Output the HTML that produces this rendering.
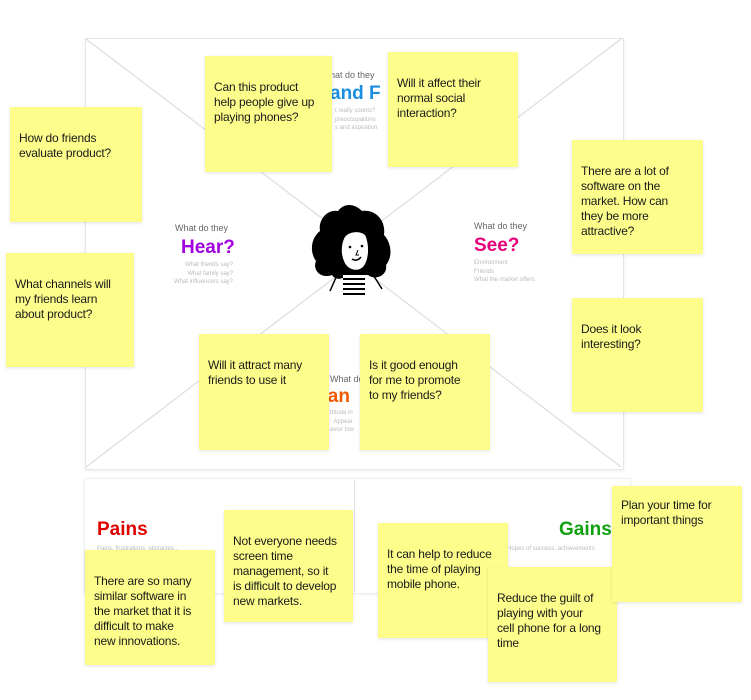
<!DOCTYPE html>
<html><head><style>
body{margin:0;width:751px;height:700px;background:#fff;position:relative;overflow:hidden;font-family:"Liberation Sans",sans-serif}
.s{position:absolute;background:#fdfd8c;box-shadow:0 1px 3px rgba(0,0,0,.12);font-size:12px;letter-spacing:-0.2px;line-height:15px;color:#1a1a1a;padding:24px 4px 0 9px;box-sizing:border-box;white-space:nowrap;overflow:hidden}
.t{position:absolute;color:#666;font-size:9px;white-space:nowrap}
.sm{position:absolute;color:#bbb;font-size:6px;line-height:8.5px;white-space:nowrap}
.h{position:absolute;font-weight:bold;font-size:19px;white-space:nowrap}
</style></head><body>
<div style="position:absolute;left:85px;top:38px;width:537px;height:430px;border:1px solid #e6e6e6;box-shadow:0 1px 3px rgba(0,0,0,.08)"></div>
<svg style="position:absolute;left:0;top:0" width="751" height="700"><g stroke="#ddd" stroke-width="1.2"><line x1="86" y1="39" x2="340" y2="232"/><line x1="621" y1="39" x2="367" y2="232"/><line x1="86" y1="467" x2="338" y2="275"/><line x1="621" y1="467" x2="370" y2="275"/></g>
<g transform="translate(300,195)">
<path d="M38 16 C28 14 18 24 20 36 C10 44 10 58 16 66 C12 76 22 84 32 80 C36 86 44 84 46 80 L68 80 C76 86 88 80 86 70 C94 60 90 46 84 40 C86 26 76 14 62 16 C54 8 44 8 38 16Z" fill="#000"/>
<path d="M44 42 C48 36 60 34 66 40 C70 50 70 64 64 72 C58 78 48 76 44 68 C40 60 40 50 44 42Z" fill="#fff" stroke="#000" stroke-width="1.5"/>
<circle cx="50" cy="52" r="1.3"/><circle cx="62" cy="51" r="1.3"/><path d="M58 55 L56 60 L59 60" stroke="#000" fill="none" stroke-width="1"/><path d="M52 64 Q57 67 61 62" stroke="#000" fill="none" stroke-width="1.5"/>
<rect x="43" y="80" width="22" height="20" fill="#fff"/><g stroke="#000" stroke-width="2"><line x1="43" y1="84" x2="65" y2="84"/><line x1="43" y1="89" x2="65" y2="89"/><line x1="43" y1="94" x2="65" y2="94"/><line x1="43" y1="99" x2="65" y2="99"/></g>
<path d="M38 78 L30 96 M72 78 L82 94" stroke="#000" stroke-width="1.5" fill="none"/></g></svg>
<div class="t" style="left:175px;top:223px">What do they</div>
<div class="h" style="left:181px;top:237px;color:#a100e0">Hear?</div>
<div class="sm" style="left:163px;top:261px;text-align:right;width:70px">What friends say?<br>What family say?<br>What influencers say?</div>
<div class="t" style="left:474px;top:221px">What do they</div>
<div class="h" style="left:474px;top:235px;color:#e8007a">See?</div>
<div class="sm" style="left:474px;top:259px">Environment<br>Friends<br>What the market offers</div>
<div class="t" style="left:330px;top:70px">hat do they</div>
<div class="h" style="left:330px;top:83px;color:#1a8fe0">and F</div>
<div class="sm" style="left:335px;top:107px">t really counts?<br>preoccupations<br>s and aspiration</div>
<div class="t" style="left:330px;top:374px">What do</div>
<div class="h" style="left:318px;top:386px;color:#f05a00">' an</div>
<div class="sm" style="left:330px;top:409px">ttitude in<br>&nbsp;&nbsp;Appear<br>avior tow</div>
<div style="position:absolute;left:84px;top:478px;width:545px;height:114px;border:1px solid #eee;box-shadow:0 1px 3px rgba(0,0,0,.06)"></div>
<div style="position:absolute;left:354px;top:480px;width:1px;height:112px;background:#e2e2e2"></div>
<div class="h" style="left:97px;top:519px;color:#e00000">Pains</div>
<div class="sm" style="left:97px;top:545px">Pains, frustrations, obstacles...</div>
<div class="h" style="left:559px;top:519px;color:#10a010">Gains</div>
<div class="sm" style="left:507px;top:545px">Hopes of success, achievements</div>
<div class="s" style="left:205px;top:56px;width:127px;height:116px">Can this product<br>help people give up<br>playing phones?</div>
<div class="s" style="left:388px;top:52px;width:130px;height:115px">Will it affect their<br>normal social<br>interaction?</div>
<div class="s" style="left:10px;top:107px;width:132px;height:115px">How do friends<br>evaluate product?</div>
<div class="s" style="left:6px;top:253px;width:128px;height:114px">What channels will<br>my friends learn<br>about product?</div>
<div class="s" style="left:572px;top:140px;width:131px;height:114px">There are a lot of<br>software on the<br>market. How can<br>they be more<br>attractive?</div>
<div class="s" style="left:572px;top:298px;width:131px;height:114px">Does it look<br>interesting?</div>
<div class="s" style="left:199px;top:334px;width:130px;height:116px">Will it attract many<br>friends to use it</div>
<div class="s" style="left:360px;top:334px;width:130px;height:116px">Is it good enough<br>for me to promote<br>to my friends?</div>
<div class="s" style="left:85px;top:550px;width:130px;height:115px">There are so many<br>similar software in<br>the market that it is<br>difficult to make<br>new innovations.</div>
<div class="s" style="left:224px;top:510px;width:129px;height:112px">Not everyone needs<br>screen time<br>management, so it<br>is difficult to develop<br>new markets.</div>
<div class="s" style="left:378px;top:523px;width:130px;height:115px">It can help to reduce<br>the time of playing<br>mobile phone.</div>
<div class="s" style="left:488px;top:567px;width:129px;height:115px">Reduce the guilt of<br>playing with your<br>cell phone for a long<br>time</div>
<div class="s" style="left:612px;top:486px;width:130px;height:116px;padding-top:12px">Plan your time for<br>important things</div>
</body></html>
